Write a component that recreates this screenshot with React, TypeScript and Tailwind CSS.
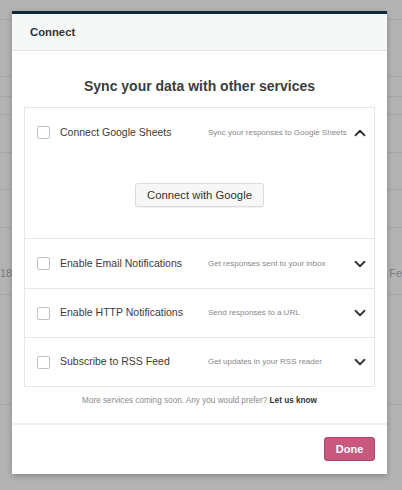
import { ChevronDown, ChevronUp } from "lucide-react";

const rows = [
  { label: "Connect Google Sheets", desc: "Sync your responses to Google Sheets", open: true, h: "h-[49px]" },
  { label: "Enable Email Notifications", desc: "Get responses sent to your inbox", open: false, h: "h-[49px]" },
  { label: "Enable HTTP Notifications", desc: "Send responses to a URL", open: false, h: "h-[48px]" },
  { label: "Subscribe to RSS Feed", desc: "Get updates in your RSS reader", open: false, h: "h-[48px]" },
];

const bgLines = [20, 57, 20, 18, 38, 37, 38, 67, 110];

function Backdrop() {
  return (
    <div className="flex flex-col">
      {bgLines.map((h, i) => (
        <div key={i} style={{ height: h }} className="border-b border-[#a6a6a6] flex items-end justify-between">
          {i === 7 ? (
            <>
              <span className="text-[11px] text-[#7c7c7c] mb-[13px]">18</span>
              <span className="text-[11px] text-[#7c7c7c] mb-[13px]">Fe</span>
            </>
          ) : null}
        </div>
      ))}
    </div>
  );
}

export default function App() {
  return (
    <div
      className="relative w-[402px] h-[490px] overflow-hidden bg-[#b3b3b3]"
      style={{ fontFamily: "'Liberation Sans', Arial, sans-serif" }}
    >
      <Backdrop />
      <div className="absolute left-[12px] top-[11px] w-[375px] bg-white border-t-[3px] border-[#10293b] shadow-[0_2px_6px_rgba(0,0,0,0.25)]">
        <div className="h-[37px] bg-[#f6f8f8] border-b border-[#e4e6e6] flex items-center px-[18px]">
          <span className="text-[11.3px] font-bold text-[#333]">Connect</span>
        </div>
        <div className="px-[12px] pt-[27px]">
          <h2 className="text-center text-[14px] font-bold text-[#3a3d40] leading-[17px]">
            Sync your data with other services
          </h2>
          <div className="mt-[12px] border border-[#e6e6e6]">
            {rows.map((r, i) => (
              <div key={r.label} className={i > 0 ? "border-t border-[#e6e6e6]" : ""}>
                <div className={`${r.h} flex items-center pl-[12px] pr-[5px]`}>
                  <span className="w-[13px] h-[13px] rounded-[2px] border border-[#c2c2c2] bg-white shrink-0" />
                  <span className="ml-[10px] w-[148px] shrink-0 text-[10.5px] text-[#3b3b3b] whitespace-nowrap">
                    {r.label}
                  </span>
                  <span className="flex-1 text-[8px] text-[#888] whitespace-nowrap">{r.desc}</span>
                  {r.open ? (
                    <ChevronUp className="w-[18px] h-[18px] text-[#333]" strokeWidth={2.4} />
                  ) : (
                    <ChevronDown className="w-[18px] h-[18px] text-[#333]" strokeWidth={2.4} />
                  )}
                </div>
                {r.open ? (
                  <div className="pt-[26px] pb-[31px] flex justify-center">
                    <button className="h-[24px] w-[129px] rounded-[3px] border border-[#dcdcdc] bg-[#f7f7f7] text-[11.3px] text-[#333] shadow-[0_1px_1px_rgba(0,0,0,0.06)]">
                      Connect with Google
                    </button>
                  </div>
                ) : null}
              </div>
            ))}
          </div>
          <p className="text-center text-[8.2px] leading-[12px] text-[#8a8a8a] pt-[8px] pb-[16px]">
            More services coming soon. Any you would prefer?{" "}
            <span className="text-[#333] font-bold">Let us know</span>
          </p>
        </div>
        <div className="border-t-2 border-[#f0f0f0] h-[51px] flex items-start justify-end pt-[12px] pr-[12px]">
          <button className="h-[24px] w-[51px] rounded-[3px] bg-[#c9587f] border border-[#b0466b] text-white text-[11px] font-bold">
            Done
          </button>
        </div>
      </div>
    </div>
  );
}
